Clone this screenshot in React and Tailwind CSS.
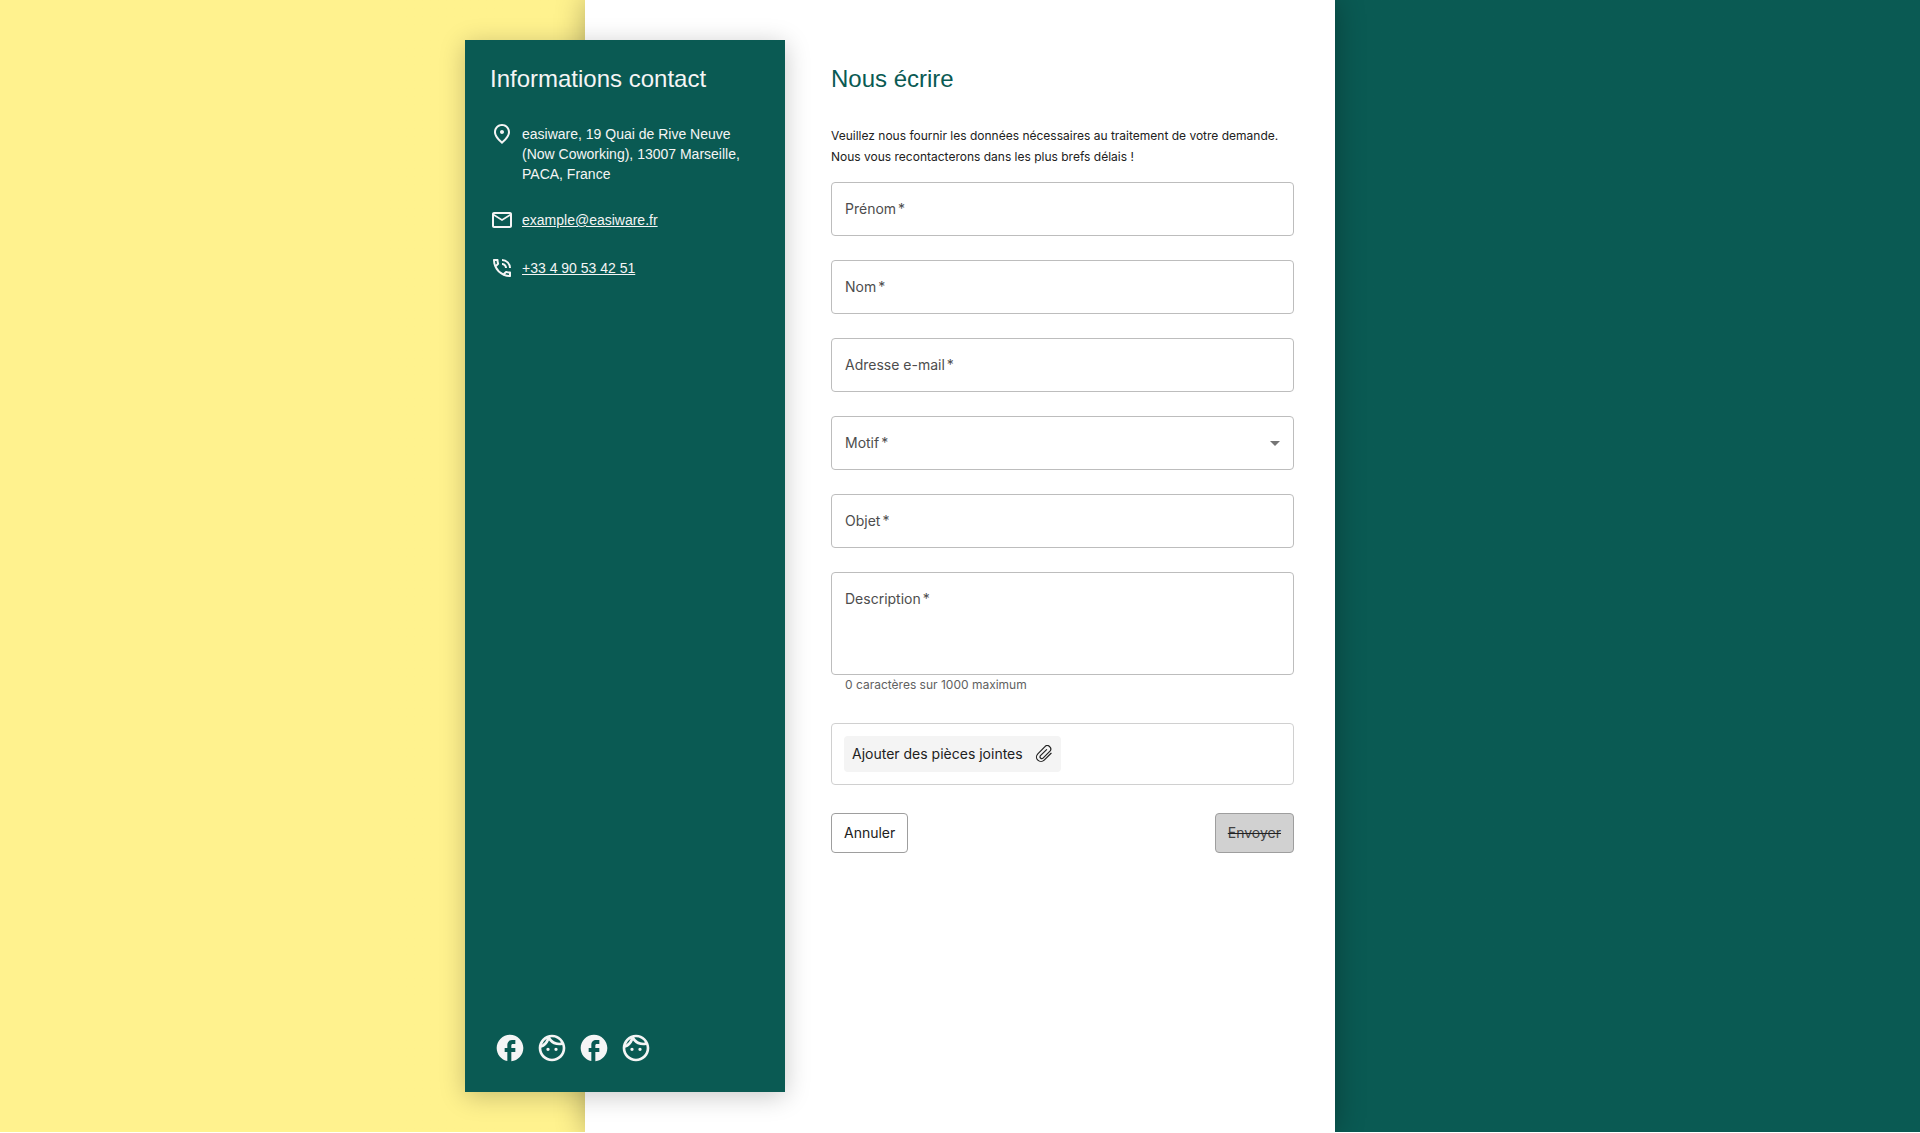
import React, { useState } from "react";
import {
  MdOutlinePlace,
  MdMailOutline,
  MdOutlinePhoneInTalk,
  MdOutlineFace,
  MdArrowDropDown,
} from "react-icons/md";

const Facebook = ({ className }) => {
  return (
    <svg viewBox="0 0 24 24" fill="currentColor" className={className}>
      <path d="M22 12c0-5.52-4.48-10-10-10S2 6.48 2 12c0 4.84 3.44 8.87 8 9.8V15H8v-3h2V9.5C10 7.57 11.57 6 13.5 6H16v3h-2c-.55 0-1 .45-1 1v2h3v3h-3v6.95c5.05-.5 9-4.76 9-9.95z"></path>
    </svg>
  );
};

const PaperClip = () => {
  return (
    <svg
      width="18"
      height="18"
      viewBox="0 0 24 24"
      fill="none"
      stroke="currentColor"
      strokeWidth="1.6"
      strokeLinecap="round"
      strokeLinejoin="round"
    >
      <path d="M21.44 11.05l-9.19 9.19a6 6 0 0 1-8.49-8.49l9.19-9.19a4 4 0 0 1 7 5.66l-9.2 9.19a2.4 2.4 0 0 1-3.8-2.83l8.49-8.48"></path>
    </svg>
  );
};

const socials = [
  { name: "Facebook", Icon: Facebook },
  { name: "Communauté", Icon: MdOutlineFace },
  { name: "Facebook groupe", Icon: Facebook },
  { name: "Assistance", Icon: MdOutlineFace },
];

const controlClass =
  "block w-full rounded border border-[#bdbdbd] bg-transparent px-3 text-sm text-[#212121] outline-none focus:border-[#0a5a53]";

const Field = ({ id, label, value, children }) => {
  return (
    <div className="relative">
      {children}
      {!value && (
        <label
          htmlFor={id}
          className="pointer-events-none absolute left-3.5 top-[15px] flex gap-0.5 text-sm leading-6 text-[#4d4d4d]"
        >
          <span>{label}</span>
          <span>*</span>
        </label>
      )}
    </div>
  );
};

const App = () => {
  const [form, setForm] = useState({
    firstName: "",
    lastName: "",
    email: "",
    reason: "",
    subject: "",
    description: "",
  });

  const handleChange = (e) => {
    setForm({ ...form, [e.target.id]: e.target.value });
  };

  return (
    <div className="flex min-h-screen justify-center overflow-hidden border-b border-white bg-linear-to-r from-[#fff28e] from-50% to-[#0a5a53] to-50% font-['Inter',sans-serif]">
      <div className="flex w-full max-w-[750px] bg-white shadow-[0_0_28px_rgba(0,0,0,0.3)]">
        {/* Contact panel */}
        <aside className="my-10 -ml-[120px] flex w-80 shrink-0 flex-col bg-[#0a5a53] px-[25px] pt-[21px] text-[#f5f5f5] shadow-[0_4px_24px_rgba(0,0,0,0.22)] font-['Liberation_Sans',Arial,sans-serif]">
          <h2 className="text-2xl leading-9">Informations contact</h2>
          <address className="mt-[25px] flex flex-col text-sm leading-5 not-italic">
            <div className="flex gap-2">
              <MdOutlinePlace className="size-6 shrink-0" />
              <span className="pt-0.5">
                easiware, 19 Quai de Rive Neuve (Now Coworking), 13007
                Marseille, PACA, France
              </span>
            </div>
            <div className="mt-6 flex items-center gap-2">
              <MdMailOutline className="size-6 shrink-0" />
              <a href="mailto:example@easiware.fr" className="underline">
                example@easiware.fr
              </a>
            </div>
            <div className="mt-6 flex items-center gap-2">
              <MdOutlinePhoneInTalk className="size-6 shrink-0" />
              <a href="tel:+33490534251" className="underline">
                +33 4 90 53 42 51
              </a>
            </div>
          </address>
          <nav className="mt-auto mb-7 flex gap-2.5 pl-1">
            {socials.map(({ name, Icon }) => (
              <a key={name} href="#" aria-label={name}>
                <Icon className="size-8" />
              </a>
            ))}
          </nav>
        </aside>

        {/* Form */}
        <main className="min-w-0 flex-1 pt-[61px] pr-[41px] pl-[46px]">
          <h1 className="text-2xl leading-9 text-[#0a5a53] font-['Liberation_Sans',Arial,sans-serif]">
            Nous écrire
          </h1>
          <p className="mt-7 text-xs leading-[21px] text-[#212121]">
            Veuillez nous fournir les données nécessaires au traitement de votre
            demande.
            <br />
            Nous vous recontacterons dans les plus brefs délais !
          </p>
          <form
            className="mt-[15px] flex flex-col gap-6"
            onSubmit={(e) => e.preventDefault()}
          >
            <Field id="firstName" label="Prénom" value={form.firstName}>
              <input
                id="firstName"
                type="text"
                value={form.firstName}
                onChange={handleChange}
                className={`${controlClass} h-[54px]`}
              />
            </Field>
            <Field id="lastName" label="Nom" value={form.lastName}>
              <input
                id="lastName"
                type="text"
                value={form.lastName}
                onChange={handleChange}
                className={`${controlClass} h-[54px]`}
              />
            </Field>
            <Field id="email" label="Adresse e-mail" value={form.email}>
              <input
                id="email"
                type="email"
                value={form.email}
                onChange={handleChange}
                className={`${controlClass} h-[54px]`}
              />
            </Field>
            <Field id="reason" label="Motif" value={form.reason}>
              <select
                id="reason"
                value={form.reason}
                onChange={handleChange}
                className={`${controlClass} h-[54px] appearance-none`}
              >
                <option value=""></option>
              </select>
              <MdArrowDropDown className="pointer-events-none absolute top-[15px] right-[7px] size-6 text-[#757575]" />
            </Field>
            <Field id="subject" label="Objet" value={form.subject}>
              <input
                id="subject"
                type="text"
                value={form.subject}
                onChange={handleChange}
                className={`${controlClass} h-[54px]`}
              />
            </Field>
            <div>
              <Field
                id="description"
                label="Description"
                value={form.description}
              >
                <textarea
                  id="description"
                  maxLength={1000}
                  value={form.description}
                  onChange={handleChange}
                  className={`${controlClass} h-[103px] resize-none py-4`}
                />
              </Field>
              <p className="pl-3.5 text-xs leading-5 text-[#616161]">
                {form.description.length} caractères sur 1000 maximum
              </p>
            </div>
            <div className="mt-1 rounded border border-[#d0d0d0] p-3">
              <button
                type="button"
                className="flex h-9 items-center gap-3 rounded bg-[#f4f4f4] px-2 text-sm text-[#212121]"
              >
                Ajouter des pièces jointes
                <PaperClip />
              </button>
            </div>
            <div className="mt-1 flex justify-between">
              <button
                type="button"
                className="h-10 rounded border border-[#9e9e9e] bg-white px-3 text-sm text-[#212121]"
              >
                Annuler
              </button>
              <button
                type="submit"
                disabled
                className="h-10 rounded border border-[#9e9e9e] bg-[#d1d1d1] px-3 text-sm text-[#424242] line-through decoration-[#212121]"
              >
                Envoyer
              </button>
            </div>
          </form>
        </main>
      </div>
    </div>
  );
};

export default App;
